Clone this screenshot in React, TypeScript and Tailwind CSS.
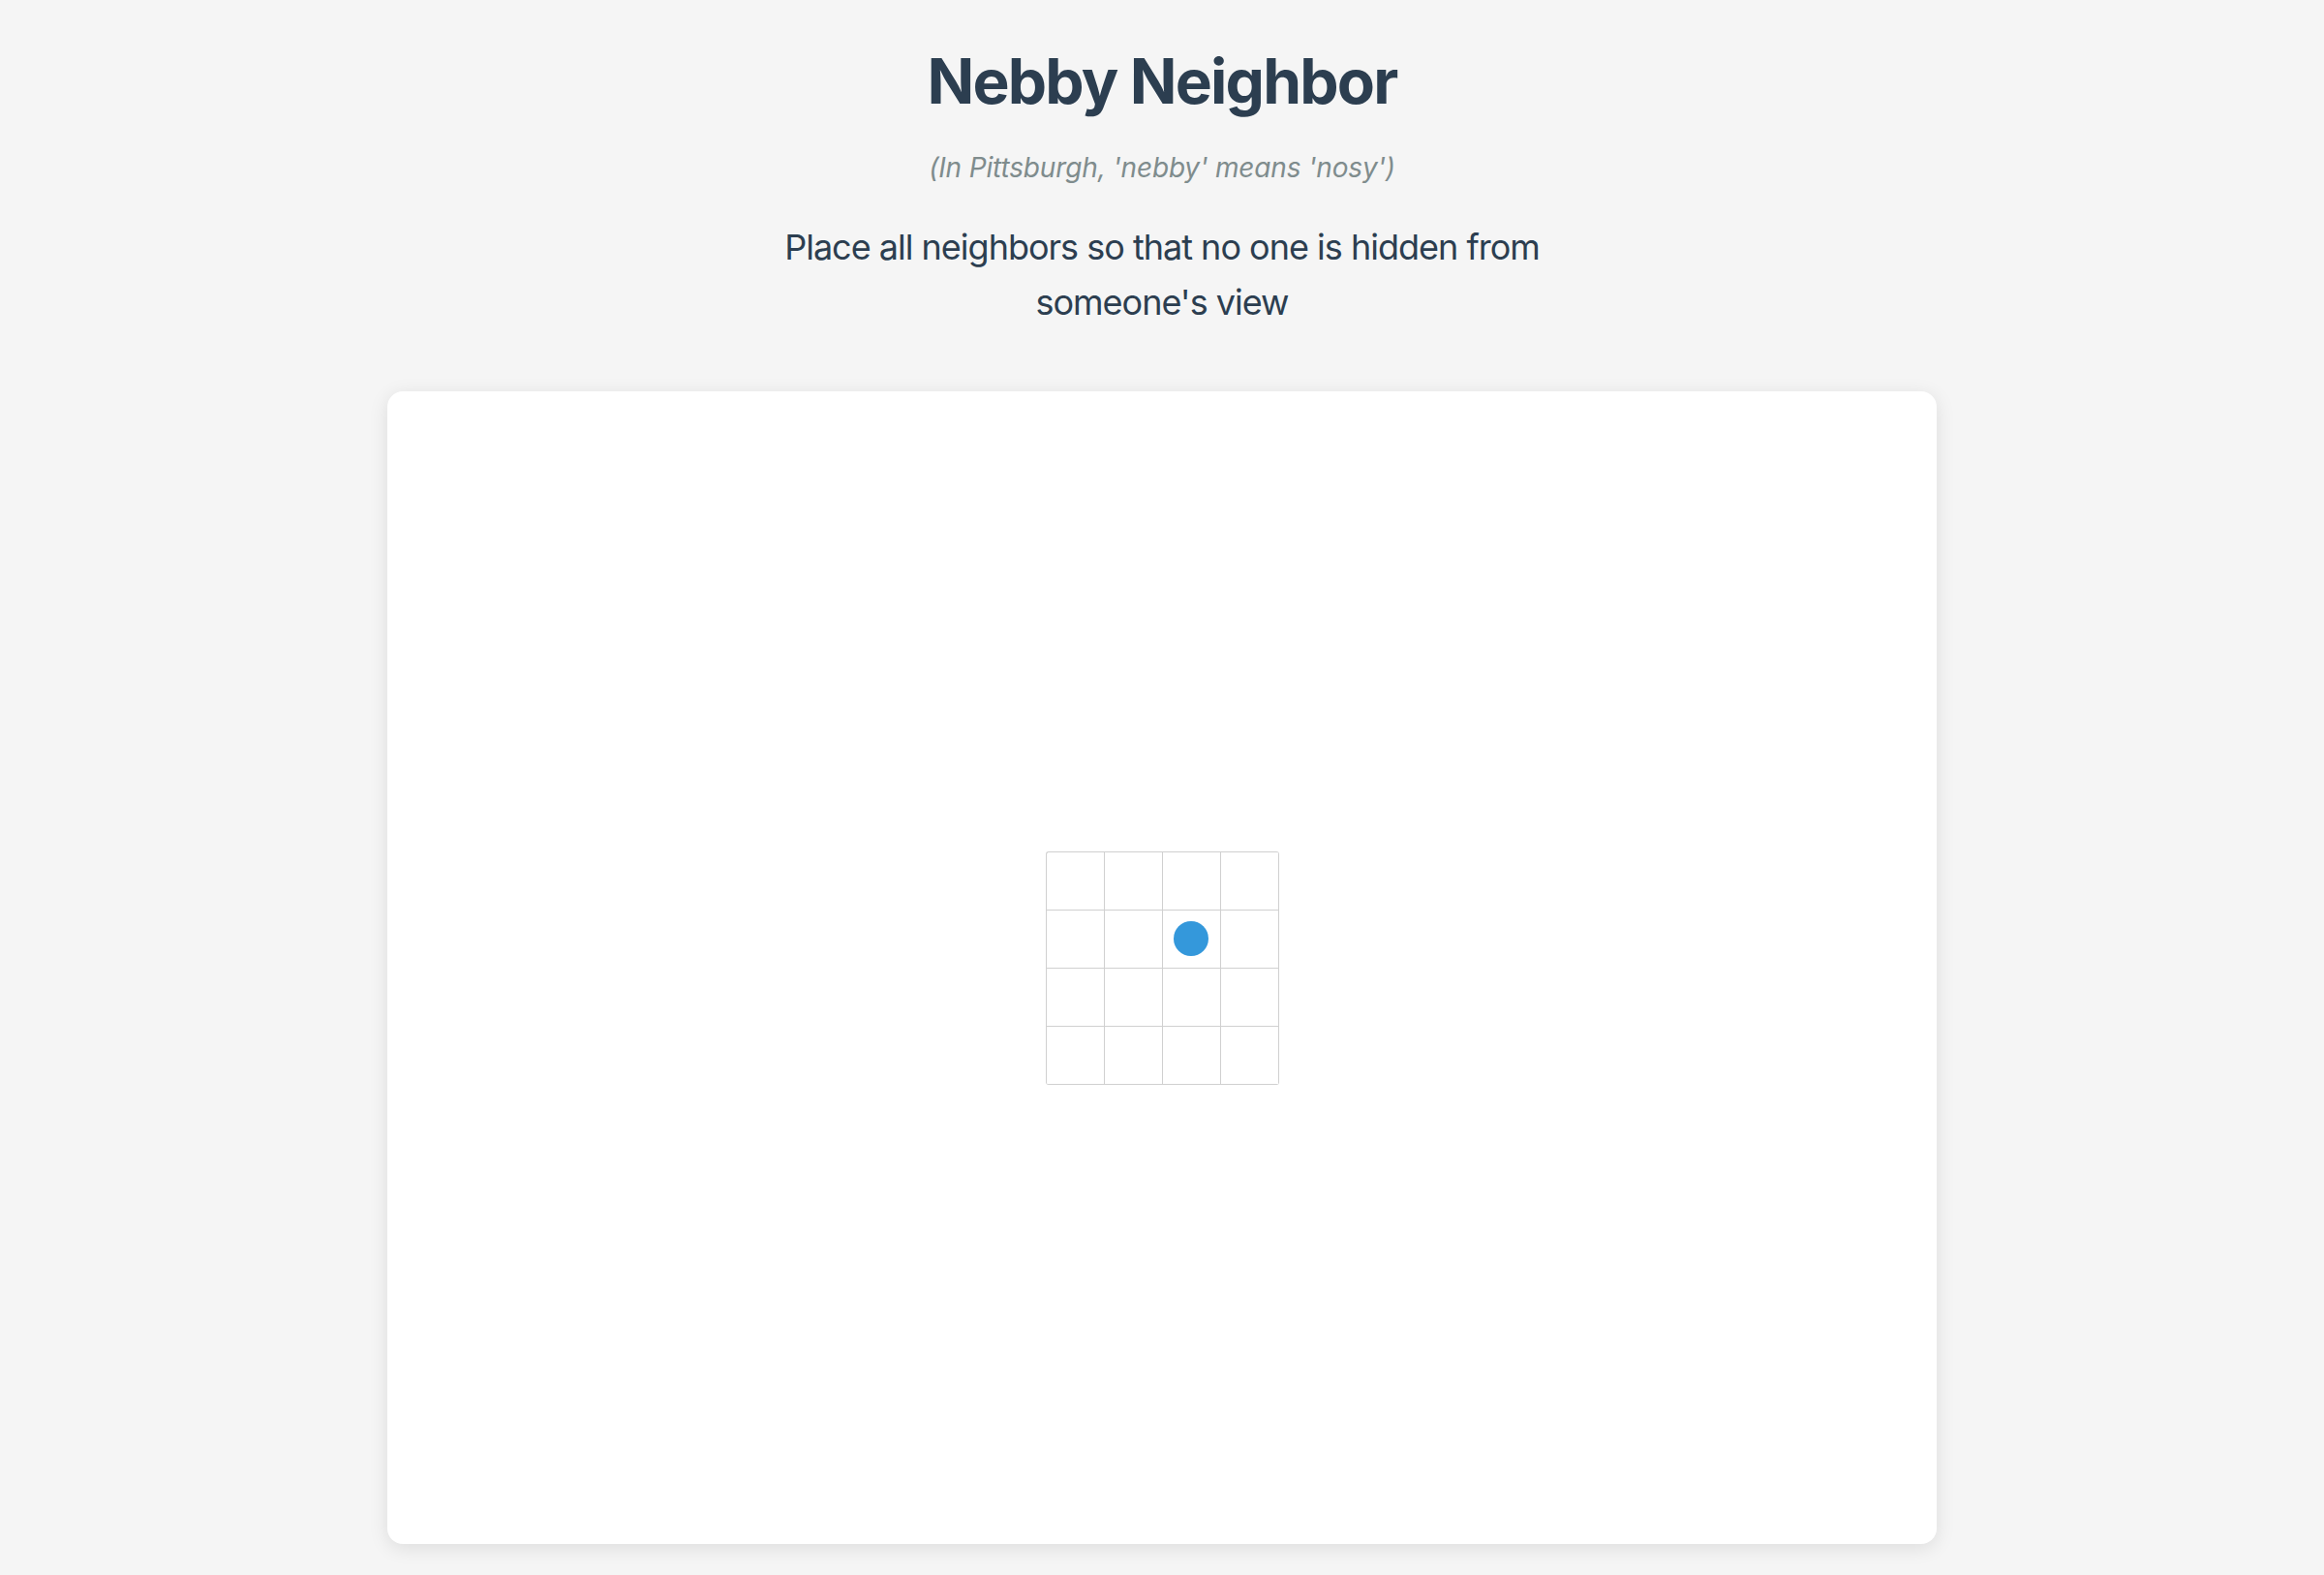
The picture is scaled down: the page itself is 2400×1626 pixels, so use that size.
import React from "react";

export default function App() {
  const cells = Array.from({ length: 16 }, (_, i) => i);
  return (
    <div
      className="min-h-[1626px] w-full bg-[#f5f5f5] flex flex-col items-center"
      style={{ fontFamily: "Inter, 'Noto Sans', sans-serif" }}
    >
      <h1 className="mt-[45px] text-[64px] leading-[77px] font-bold text-[#2c3e50] tracking-[-1.8px]">
        Nebby Neighbor
      </h1>
      <p className="mt-[30px] text-[28px] leading-[42px] italic text-[#7f8c8d] tracking-[-0.15px]">
        (In Pittsburgh, 'nebby' means 'nosy')
      </p>
      <p className="mt-[33px] text-[36px] leading-[57px] text-[#2c3e50] text-center tracking-[-1px]">
        Place all neighbors so that no one is hidden from
        <br />
        someone's view
      </p>
      <div className="mt-[63px] w-[1600px] h-[1190px] bg-white rounded-[16px] shadow-[0_4px_20px_rgba(0,0,0,0.1)] flex items-center justify-center">
        <div className="grid grid-cols-[repeat(4,60px)] border-l border-t border-[#d0d0d0] rounded-[3px] overflow-hidden">
          {cells.map((i) => (
            <div
              key={i}
              className="w-[60px] h-[60px] border-r border-b border-[#d0d0d0] flex items-center justify-center"
            >
              {i === 6 && <div className="w-[36px] h-[36px] rounded-full bg-[#3498db]" />}
            </div>
          ))}
        </div>
      </div>
    </div>
  );
}
